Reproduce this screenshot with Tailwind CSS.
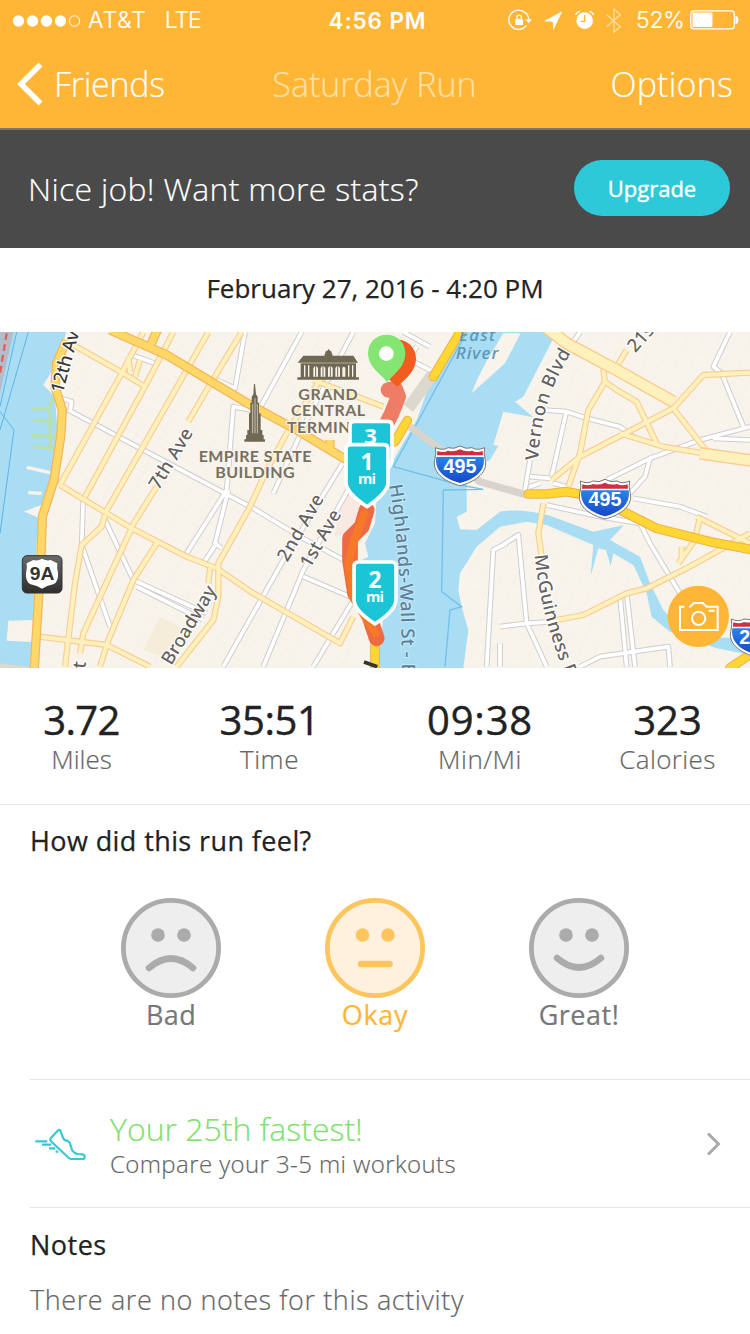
<!DOCTYPE html>
<html lang="en">
<head>
<meta charset="utf-8">
<title>Saturday Run</title>
<script src="https://cdn.jsdelivr.net/npm/@tailwindcss/browser@4"></script>
</head>
<body class="w-[750px] h-[1334px] overflow-hidden bg-white font-['Open_Sans',sans-serif] text-[#222] [-webkit-text-stroke:0.2px]">

<header class="h-[130px] bg-[#ffb536] border-b-2 border-[#7d7768] text-white flex flex-col">
  <!-- Status bar -->
  <div class="h-10 grid grid-cols-[1fr_auto_1fr] items-center pl-3 pr-[11px] font-['Inter',sans-serif] text-[23px]">
    <div class="flex items-center pt-px">
      <svg class="w-[69px] h-3" viewBox="0 0 69 12" fill="#fff"><circle cx="6.500" cy="6" r="5.700"/><circle cx="20.500" cy="6" r="5.700"/><circle cx="34.500" cy="6" r="5.700"/><circle cx="48.500" cy="6" r="5.700"/><circle cx="62.500" cy="6" r="5.200" fill="none" stroke="#fff"/></svg>
      <span class="ml-[7px] font-light tracking-[0.9px]">AT&amp;T</span>
      <span class="ml-[18px] font-light tracking-[-1px]">LTE</span>
    </div>
    <div class="font-semibold text-[22.5px] tracking-[0.9px] [-webkit-text-stroke:0] pt-0.5 pl-1">4:56 PM</div>
    <div class="flex items-center justify-end">
      <svg class="w-[128px] h-10" viewBox="0 0 384 120" fill="none" stroke="#fff" stroke-width="4">
        <path d="M76 39A29 29 0 1 0 80 75M74 36Q86 46 86 58"/><path d="M76 58h20l-10 12z" fill="#fff" stroke="none"/>
        <rect x="46" y="57" width="23" height="18" rx="2" fill="#fff" stroke="none"/><path d="M51 58v-6a6.500 6.500 0 0 1 13 0v6"/>
        <path d="M187 34 131 64l27 1 2 25z" fill="#fff" stroke="none"/>
        <circle cx="254" cy="62" r="25" fill="#fff" stroke="none"/><path d="M227 45q3-9 13-11M281 45q-3-9-13-11"/><path d="M254 45v19h-12" stroke="#ffb536"/>
        <path d="M320 44 361 80 342 97V27L361 44 320 80" stroke="#ffdc9d"/>
      </svg>
      <span class="ml-[8px] w-[49px] font-light tracking-[-0.2px] pt-px">52%</span>
      <svg class="ml-1 w-[50px] h-5" viewBox="0 0 50 20"><rect x="1.800" y=".800" width="43.500" height="18" rx="3" fill="none" stroke="#fff" stroke-width="1.300"/><rect x="3.500" y="2.500" width="20" height="14.600" rx="1" fill="#fff"/><path d="M46.500 6q3 0 3 4t-3 4z" fill="#fff"/></svg>
    </div>
  </div>
  <!-- Navigation -->
  <nav class="h-[88px] grid grid-cols-[1fr_auto_1fr] items-center pl-4 pr-[17px] text-[34px] leading-[44px] font-light">
    <div class="flex items-center">
      <svg class="w-[27px] h-[44px]" viewBox="0 0 27 44" fill="none" stroke="#fff" stroke-width="5.500"><path d="M24.500 2.500 5 22l19.500 19.500"/></svg>
      <span class="ml-[9px] tracking-[-0.3px] pl-0.5">Friends</span>
    </div>
    <h1 class="text-[#ffe0a6]">Saturday Run</h1>
    <div class="text-right tracking-[0.2px]">Options</div>
  </nav>
</header>

<section class="h-[118px] bg-[#4a4a4a] flex items-center justify-between pl-[28px] pr-5 pb-0.5">
  <p class="text-white text-[32px] font-light tracking-[0.3px] pt-0.5">Nice job! Want more stats?</p>
  <button class="w-[156px] h-14 rounded-full bg-[#2ec9d8] text-white text-[22px] font-medium [-webkit-text-stroke:0.4px]">Upgrade</button>
</section>

<div class="h-[84px] flex items-center justify-center text-[26px] font-medium pb-[3px] [-webkit-text-stroke:0.25px]">February 27, 2016 - 4:20 PM</div>

<!-- Route map: three map units per pixel -->
<svg class="block w-[750px] h-[336px] [-webkit-text-stroke:0]" viewBox="0 6 2250 1008" font-family="'Lato', sans-serif">
  <defs>
    <pattern id="west" width="72" height="23" patternUnits="userSpaceOnUse" patternTransform="rotate(27)"><path d="M0 0H72M0 0V23" fill="none" stroke="#f0ebe2" stroke-width="2.500"/></pattern>
    <pattern id="east" width="44" height="66" patternUnits="userSpaceOnUse" patternTransform="rotate(24)"><path d="M0 0H44M0 0V66" fill="none" stroke="#f1ece3" stroke-width="2.500"/></pattern>
    <linearGradient id="blue" x2="0" y2="1"><stop stop-color="#2a83e8"/><stop offset="1" stop-color="#1647c8"/></linearGradient>
    <linearGradient id="dark" x2="0" y2="1"><stop stop-color="#6a6a6a"/><stop offset="1" stop-color="#2e2e2e"/></linearGradient>
    <g id="shield"><path d="M-74-52Q-52-42-36-52Q-18-46 0-57Q18-46 36-52Q52-42 74-52Q70-38 76-14C84 26 40 52 0 62C-40 52-84 26-76-14Q-70-38-74-52Z" fill="#fff" stroke="#777" stroke-width="3"/><path d="M-68-42Q-50-36-36-43Q-18-38 0-47Q18-38 36-43Q50-36 68-42L69-29H-69Z" fill="#cf2e45"/><path d="M-71-24H71C78 22 38 44 0 54C-38 44-78 22-71-24Z" fill="url(#blue)"/></g>
    <g id="pin"><path d="M-63-80Q-63-93-50-93H50Q63-93 63-80V20C63 48 30 73 0 93C-30 73-63 48-63 20Z" fill="#1bc5d6" stroke="#fff" stroke-width="11" stroke-linejoin="round"/></g>
    <g id="minor">
      <path d="M180 465 365 130 430 6M255 500 440 160 520 6M315 550 560 120 625 6M395 590 470 470M565 275 620 180 725 6M220 45 370 130 435 170M390 125 385 80M405 140 420 90M180 465 395 595 560 680 650 715 760 790 1020 940 1060 860M395 595 355 680 250 910 240 970M315 555 305 590 245 645 225 760 195 1010M470 640 400 750 325 930 300 1010M120 920 320 945 450 1010M750 530 655 700 655 800 640 870 530 1010M630 715 625 760M750 530 800 420 860 310 960 150 980 100M940 150 1150 230"/>
      <path d="M1880 60 1850 110 1810 120 1815 155 1765 240 1740 370 1705 470M1655 450 1740 380 2020 235 2110 135 2250 128M1815 155 1850 180 1910 215 1970 340M1860 310 1990 350 2110 370 2250 392M2020 235 2125 370M1630 520 1615 610 1625 680M1670 870 1750 855 1880 790 1940 775 2060 715 2250 610M2090 560 2250 640M2100 560 2085 630 2035 700M2045 650V690"/>
    </g>
    <g id="small">
      <path d="M185 205 215 215 210 245M205 240 430 360 760 535 900 620 1050 700M250 500 245 645 330 890M315 570 400 750 620 850M410 770 610 870M780 245 700 230 680 480 560 670M685 480 645 640 665 655M650 640 610 700M650 150 705 175 735 6M395 75 465 100M670 1010 850 690 1040 380M790 1010 910 720 1050 470M940 1010 1090 760M760 270 905 6M910 740 1050 800M820 490 930 250 1060 6M1180 170 1250 50M1190 70 1290 120M1210 6 1290 50"/>
      <path d="M1500 650 1555 615 1580 880 1500 890M1580 880 1640 1010M1580 880 1660 875M1500 940V1010M1700 240 1655 440M1630 240 1700 245 1760 265 1860 290 1900 320M1590 390 1575 480M1590 440 1650 445M1660 460 1700 470M1590 470 1620 460M1820 450 1840 440 1950 385 2100 330 2250 290M1950 385 1935 440 1890 490M1900 505 2040 530 2120 560M1640 525 1800 560 1920 580 1950 640 2040 790M2190 6 2140 110 2165 130 2230 290M2140 325 2250 330M1860 800 1880 1010M1880 790 1905 1010M1740 1010 1800 980 2005 950 2010 1010M1690 80 1740 6M1460 1010 1480 660 1520 640"/>
    </g>
  </defs>
  <rect y="0" width="2250" height="1020" fill="#f8f4ec"/>
  <rect y="0" width="1260" height="1020" fill="url(#west)"/>
  <rect x="1400" y="0" width="850" height="1020" fill="url(#east)"/>
  <path d="M480 860 560 900 520 990 430 960Z" fill="#f5ecd9"/>
  <path d="M1030 500 1120 450 1100 600 1000 620Z" fill="#fae9e3"/>
  <!-- Hudson -->
  <path d="M0 0H200L175 90 130 165 165 200 172 300 165 440 125 560 112 600 105 720 100 870 25 872 20 932 98 936 90 1014H0Z" fill="#a9ddf3"/>
  <path d="M0 1000 90 1010 90 1020H0Z" fill="#ded9cd"/>
  <path d="M0 0H42L0 190Z" fill="#b3bccb"/><path d="M20 10 0 130" stroke="#e2604f" stroke-width="7" stroke-dasharray="20 13"/>
  <path d="M50 6 0 230M85 6 0 300M0 245 42 300 0 610" fill="none" stroke="#5fb3e6" stroke-width="3"/>
  <path d="M165 195 145 235 95 238M165 275 100 270M170 320 95 315M165 355 98 350M150 240V360" fill="none" stroke="#b9e0a8" stroke-width="9"/>
  <path d="M80 412 150 428M85 488 125 490M85 545 125 530 120 560Z" stroke="#f8f4ec" stroke-width="10" fill="#f8f4ec"/>
  <!-- East River -->
  <path d="M1390 6H1670L1570 200 1545 215 1600 262 1510 245 1480 345 1495 348 1470 390 1400 420 1400 545 1370 560 1380 598 1430 600 1500 545C1530 538 1590 540 1650 557L1780 605 1872 585 1830 630 1920 680 1950 760 1990 840 2070 920 2250 925V975L2150 955 2010 905 1955 860 1940 790 1900 705 1840 670 1832 708 1818 660 1795 655 1772 738 1780 645 1640 585 1580 575 1500 590 1430 650 1380 730 1375 780 1385 830 1405 900 1390 1014H1132L1142 930 1150 860 1100 790 1085 740V690L1105 680 1095 640 1125 580 1130 500 1180 390 1250 270 1300 130Z" fill="#a9ddf3"/>
  <path d="M1415 190C1440 120 1480 60 1510 10H1562L1515 100Z" fill="#f8f4ec"/>
  <path d="M1400 6 1180 410 1380 465 1450 478 1330 480 1325 785 1385 830 1350 840 1335 1010" fill="none" stroke="#74bfeb" stroke-width="4"/>
  <path d="M1230 290 1310 350 1440 455 1580 495" fill="none" stroke="#d7d4ce" stroke-width="22"/>
  <path d="M1225 235 1300 130" stroke="#ddd8ce" stroke-width="36"/>
  <g fill="none" stroke-linejoin="round">
    <use href="#small" stroke="#cfcdce" stroke-width="17"/><use href="#small" stroke="#fff" stroke-width="11"/>
    <use href="#minor" stroke="#f9cd96" stroke-width="19"/><use href="#minor" stroke="#fff1bb" stroke-width="12"/>
    <path d="M1640 -6 1700 40 1850 120 2020 215M2100 370 2270 394" stroke="#f9c98c" stroke-width="38"/><path d="M1640 -6 1700 40 1850 120 2020 215M2100 370 2270 394" stroke="#fff1bb" stroke-width="30"/>
    <path d="M330 0 500 75 760 230 890 300 1040 390M445 60 475 -6M990 360V330M200 30 170 100 165 170 187 240 182 320 162 450 127 560 122 700 103 1014" stroke="#f2b45d" stroke-width="28"/>
    <path d="M330 0 500 75 760 230 890 300 1040 390M445 60 475 -6M990 360V330M200 30 170 100 165 170 187 240 182 320 162 450 127 560 122 700 103 1014" stroke="#ffd766" stroke-width="21"/>
    <g stroke-linecap="round"><path d="M1390 -10 1300 140M1222 272 1185 335M1125 940V1020M1585 492H1640L1700 485 1780 500 1870 545 1970 595 2130 635 2260 660M2270 960 2190 1014" stroke="#eeb04a" stroke-width="29"/><path d="M1390 -10 1300 140M1222 272 1185 335M1125 940V1020M1585 492H1640L1700 485 1780 500 1870 545 1970 595 2130 635 2260 660M2270 960 2190 1014" stroke="#ffd633" stroke-width="23"/></g>
  </g>
  <!-- Street names -->
  <g fill="#66625e" stroke="#fff" stroke-width="7" paint-order="stroke" stroke-linejoin="round" font-size="55" font-weight="500" font-family="'Noto Sans', sans-serif">
    <text transform="translate(188 192) rotate(-75)" fill="#3c3a38" textLength="222">12th Ave</text>
    <text transform="translate(476 482) rotate(-59)" textLength="203">7th Ave</text>
    <text transform="translate(514 1008) rotate(-59)" textLength="265">Broadway</text>
    <text transform="translate(862 698) rotate(-60)" textLength="222">2nd Ave</text>
    <text transform="translate(930 717) rotate(-60)" textLength="190">1st Ave</text>
    <path id="line" d="M1168 465C1190 600 1206 760 1206 1080" fill="none" stroke="none"/>
    <text fill="#5b7f99" stroke="#c5e8f6"><textPath href="#line" textLength="568">Highlands-Wall St - E</textPath></text>
    <text transform="translate(250 1075) rotate(-84)">1st</text>
    <path d="M1092 996 1132 1010" stroke="#333" stroke-width="11"/>
    <path id="vernon" d="M1615 392C1622 250 1652 170 1714 67" fill="none" stroke="none"/>
    <text><textPath href="#vernon" textLength="342">Vernon Blvd</textPath></text>
    <path id="guin" d="M1604 675C1616 800 1646 930 1736 1130" fill="none" stroke="none"/>
    <text><textPath href="#guin" textLength="464">McGuinness Blvd</textPath></text>
    <text transform="translate(1906 70) rotate(-48)">21st St</text>
    <g font-style="italic" fill="#5b96b8" stroke="none" font-size="51"><text x="1377" y="32" textLength="108">East</text><text x="1367" y="86" textLength="128">River</text></g>
  </g>
  <!-- Landmarks -->
  <g fill="#77705f" stroke="#f8f4ec" stroke-width="7" paint-order="stroke" font-size="48" font-weight="700" text-anchor="middle">
    <text x="984" y="210" textLength="178">GRAND</text><text x="984" y="259" textLength="222">CENTRAL</text><text x="861" y="308" text-anchor="start" textLength="252">TERMINAL</text>
    <text x="765" y="397" textLength="338">EMPIRE STATE</text><text x="765" y="445" textLength="238">BUILDING</text>
  </g>
  <g fill="#6f6853">
    <path d="M892 149V142H902V100H1068V142H1077V149Z"/><path d="M893 98 910 77H973L978 62H983L986 56 989 62H993L998 77H1060L1074 98Z"/>
    <path d="M914 106V140M1058 106V140M926 106V140M1046 106V140" stroke="#f8f4ec" stroke-width="4"/>
    <path d="M940 140V114Q947 102 954 114V140ZM962 140V114Q969 102 976 114V140ZM984 140V114Q991 102 998 114V140ZM1006 140V114Q1013 102 1020 114V140ZM1027 140V114Q1031 106 1036 114V140Z" fill="#f8f4ec"/><path d="M947 108V140M969 108V140M991 108V140M1013 108V140" stroke="#6f6853" stroke-width="3"/>
    <path d="M762 162 765 162 768 193 773 200V218H777V250H782V300H787V315H791V328H795V335H733V328H738V315H742V300H747V250H751V218H755V200L760 193Z"/><path d="M758 222V310M765 205V310M772 222V310" stroke="#f8f4ec" stroke-width="2"/>
  </g>
  <!-- Route -->
  <g fill="none" stroke-linecap="round" stroke-linejoin="round">
    <path d="M1165 180 1185 175 1195 200 1175 250 1150 300" stroke="#ed6f55" stroke-width="46" stroke-opacity=".9"/>
    <path d="M1100 540 1085 590 1050 625 1050 690 1065 790 1105 850 1130 925" stroke="#ee6a44" stroke-width="47"/>
    <path d="M1093 550 1060 640 1045 700 1060 800 1095 860 1127 910" stroke="#f47a28" stroke-width="24"/>
  </g>
  <path d="M1192 170C1170 150 1140 130 1140 87A54 58 0 1 1 1248 87C1248 120 1220 145 1192 170Z" fill="#f45b1f"/>
  <path d="M1162 156C1140 130 1104 110 1104 69A56 55 0 1 1 1216 69C1216 110 1184 130 1162 156Z" fill="#84e572"/><circle cx="1159" cy="71" r="22" fill="#fff"/>
  <g fill="#fff" text-anchor="middle" font-weight="700" font-family="'Open Sans', sans-serif">
    <use href="#pin" x="1113" y="367"/><text x="1112" y="341" font-size="66">3</text>
    <use href="#pin" x="1101" y="437"/><text x="1101" y="420" font-size="68">1</text><text x="1101" y="461" font-size="44" textLength="54">mi</text>
    <use href="#pin" x="1125" y="789"/><text x="1125" y="774" font-size="68">2</text><text x="1125" y="815" font-size="44" textLength="54">mi</text>
  </g>
  <!-- Road shields -->
  <g font-family="'Liberation Sans', sans-serif" font-weight="700" font-size="59" fill="#fff" text-anchor="middle">
    <use href="#shield" x="1380" y="405"/><text x="1380" y="428">495</text>
    <use href="#shield" x="1815" y="505"/><text x="1815" y="528">495</text>
    <use href="#shield" x="2268" y="919"/><text x="2218" y="942" text-anchor="start">278</text>
    <rect x="67" y="677" width="119" height="112" rx="14" fill="url(#dark)" stroke="#333" stroke-width="3"/>
    <path d="M80 700 100 690Q112 694 126 686Q140 694 152 690L172 700Q170 712 174 730Q176 756 160 763Q140 767 126 776Q112 767 92 763Q76 756 78 730Q82 712 80 700Z"/>
    <text x="126" y="751" font-size="54" textLength="74" lengthAdjust="spacingAndGlyphs" fill="#333">9A</text>
  </g>
  <!-- Camera button -->
  <circle cx="2095" cy="859" r="92" fill="#ffb536"/>
  <g fill="none" stroke="#fff" stroke-width="6"><path d="M2053 830H2040V900H2153V830H2120L2108 819H2082L2070 830H2067M2126 842H2144"/><circle cx="2096" cy="865" r="20"/></g>
</svg>

<section class="h-[137px] border-b border-[#e6e6e6] pt-[30px] grid grid-cols-[163px_212px_210px_165px] text-center">
  <div><div class="text-[40px] leading-[44px] font-medium tracking-[-0.6px] [-webkit-text-stroke:0.4px]">3.72</div><div class="text-[26px] leading-[34px] font-light text-[#666]">Miles</div></div>
  <div><div class="text-[40px] leading-[44px] font-medium tracking-[-0.4px] [-webkit-text-stroke:0.4px] pl-px">35:51</div><div class="text-[26px] leading-[34px] font-light tracking-[0.6px] text-[#666] pl-px">Time</div></div>
  <div><div class="text-[40px] leading-[44px] font-medium tracking-[0.8px] [-webkit-text-stroke:0.4px]">09:38</div><div class="text-[26px] leading-[34px] font-light tracking-[0.5px] text-[#666]">Min/Mi</div></div>
  <div><div class="text-[40px] leading-[44px] font-medium [-webkit-text-stroke:0.4px]">323</div><div class="text-[26px] leading-[34px] font-light tracking-[0.4px] text-[#666]">Calories</div></div>
</section>

<section class="h-[275px] ml-[30px] border-b border-[#e6e6e6]">
  <h2 class="pt-4 text-[27px] leading-10 font-medium tracking-[0.4px] [-webkit-text-stroke:0.25px]">How did this run feel?</h2>
  <div class="mt-[37px] ml-[39px] flex text-center text-[27px] leading-[34px] text-[#777]">
    <div class="w-[204px] flex flex-col items-center tracking-[0.4px]">
      <svg class="w-[100px] h-[100px]" viewBox="0 0 100 100" fill="none" stroke="#ababab" stroke-linecap="round"><circle cx="50" cy="50" r="47.600" fill="#eee" stroke-width="4.800"/><g fill="#ababab" stroke="none"><circle cx="37" cy="37" r="6.800"/><circle cx="63" cy="37" r="6.800"/></g><path d="M28 70Q50 51 72 70" stroke-width="6.500"/></svg>
      <span>Bad</span>
    </div>
    <div class="w-[204px] flex flex-col items-center tracking-[0.7px] text-[#ffb536]">
      <svg class="w-[100px] h-[100px]" viewBox="0 0 100 100" fill="none" stroke="#fcc55d" stroke-linecap="round"><circle cx="50" cy="50" r="47.600" fill="#fff1de" stroke-width="4.800"/><g fill="#fcc55d" stroke="none"><circle cx="37.500" cy="37" r="6.800"/><circle cx="63" cy="37" r="6.800"/></g><path d="M36 66H64.500" stroke-width="6.500"/></svg>
      <span>Okay</span>
    </div>
    <div class="w-[204px] flex flex-col items-center tracking-[0.5px]">
      <svg class="w-[100px] h-[100px]" viewBox="0 0 100 100" fill="none" stroke="#ababab" stroke-linecap="round"><circle cx="50" cy="50" r="47.600" fill="#eee" stroke-width="4.800"/><g fill="#ababab" stroke="none"><circle cx="37" cy="37" r="6.800"/><circle cx="63" cy="37" r="6.800"/></g><path d="M28 60Q50 79 72 60" stroke-width="6.500"/></svg>
      <span>Great!</span>
    </div>
  </div>
</section>

<section class="h-32 ml-[30px] border-b border-[#e6e6e6] flex items-center pr-[29px] pt-px">
  <svg class="ml-[5px] w-[51px] h-9" viewBox="0 0 153 108" fill="none" stroke="#35c8d6" stroke-width="6.500" stroke-linejoin="round"><path d="M47 37 68 14Q73 9 76 14L84 35Q88 45 97 44L104 50 112 74Q117 81 127 84L142 85Q149 87 149 93T143 99H108Q104 99 99 94L48 46Q44 41 47 37Z"/><path d="M1 46H37M21 56H49M42 67H60M62 77H70"/></svg>
  <div class="ml-6 pt-[3px] flex-1">
    <div class="text-[32px] leading-9 font-light text-[#7fe070]">Your 25th fastest!</div>
    <div class="text-[24px] leading-[34px] font-light tracking-[0.4px] text-[#666]">Compare your 3-5 mi workouts</div>
  </div>
  <svg class="w-[15px] h-6" viewBox="0 0 15 24" fill="none" stroke="#aaa" stroke-width="3"><path d="M2 1.500 12.500 12 2 22.500"/></svg>
</section>

<section class="pl-[30px] pt-[17px]">
  <h2 class="text-[27px] leading-10 font-medium tracking-[0.5px] [-webkit-text-stroke:0.25px]">Notes</h2>
  <p class="mt-[15px] text-[27px] leading-10 font-light tracking-[0.6px] text-[#666]">There are no notes for this activity</p>
</section>
</body>
</html>
